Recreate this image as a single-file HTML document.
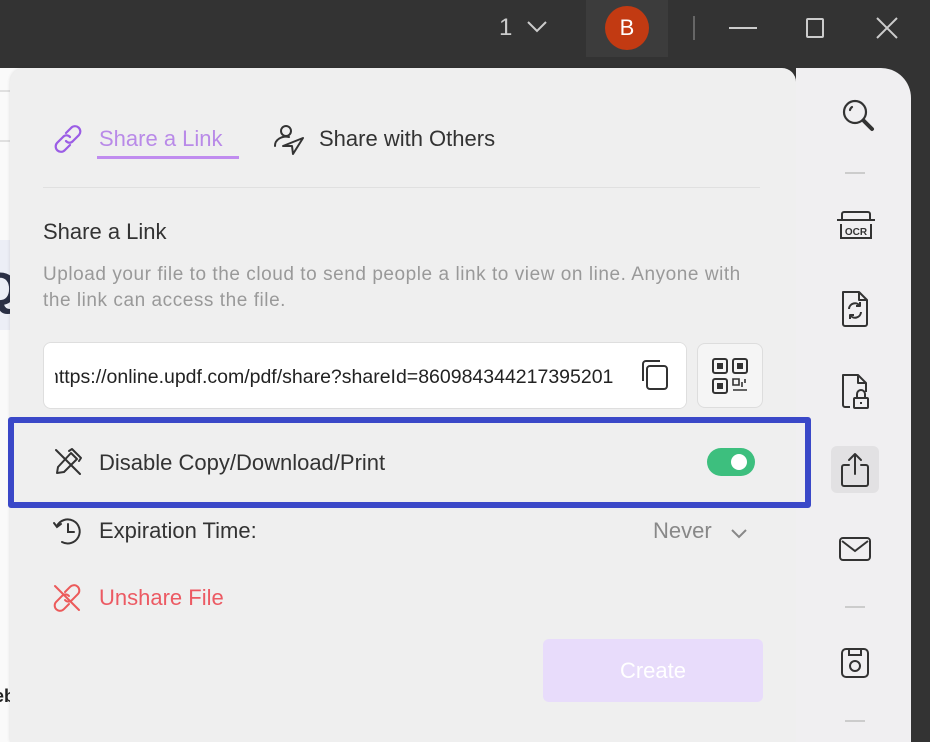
<!DOCTYPE html>
<html><head><meta charset="utf-8"><style>
*{margin:0;padding:0;box-sizing:border-box}
body{width:930px;height:742px;overflow:hidden;background:#333;font-family:"Liberation Sans",sans-serif;position:relative}
.abs{position:absolute}
.doc{left:0;top:68px;width:30px;height:674px;background:#fafafa}
.panel{left:10px;top:68px;width:786px;height:674px;background:#efefef;border-radius:14px 14px 0 0;box-shadow:0 0 3px rgba(0,0,0,.12)}
.side{left:796px;top:68px;width:115px;height:674px;background:#f0eff1;border-radius:0 30px 0 0}
.t{position:absolute;white-space:nowrap}
svg{position:absolute;overflow:visible}
</style></head><body>
<!-- title bar -->
<div class="t" style="left:499px;top:14px;font-size:24px;color:#ccc">1</div>
<svg style="left:526px;top:20px" width="22" height="14"><path d="M2 2 L11 11 L20 2" fill="none" stroke="#ccc" stroke-width="2"/></svg>
<div class="abs" style="left:586px;top:0;width:82px;height:57px;background:#3c3c3c"></div>
<div class="abs" style="left:605px;top:6px;width:44px;height:44px;border-radius:50%;background:#c23a12;color:#fff;font-size:22px;text-align:center;line-height:44px">B</div>
<div class="abs" style="left:693px;top:16px;width:2px;height:24px;background:#666"></div>
<div class="abs" style="left:729px;top:27px;width:28px;height:2px;background:#ccc"></div>
<div class="abs" style="left:806px;top:18px;width:18px;height:20px;border:2px solid #ccc;border-radius:2px"></div>
<svg style="left:876px;top:17px" width="22" height="22"><path d="M1 1L21 21M21 1L1 21" stroke="#ccc" stroke-width="2"/></svg>

<div class="abs doc"></div>
<div class="abs" style="left:0;top:90px;width:10px;height:2px;background:#e0e0e0"></div>
<div class="abs" style="left:0;top:140px;width:10px;height:2px;background:#e0e0e0"></div>
<div class="abs" style="left:0;top:240px;width:10px;height:90px;background:#eceef6"></div>
<div class="t" style="left:-18px;top:262px;font-size:46px;font-weight:bold;color:#2a2f45">Q</div>
<div class="t" style="left:-6px;top:686px;font-size:18px;font-weight:bold;color:#222">eb</div>

<div class="abs panel"></div>
<div class="abs side"></div>

<!-- tabs -->
<svg style="left:53px;top:124px" width="30" height="30" fill="none" stroke="#9b5de5" stroke-width="2.2" stroke-linecap="round"><path d="M13 9 L18 4 A4.5 4.5 0 0 1 26 11 L20 17 A4.5 4.5 0 0 1 13 17"/><path d="M17 21 L12 26 A4.5 4.5 0 0 1 4 19 L10 13 A4.5 4.5 0 0 1 17 13"/></svg>
<div class="t" style="left:99px;top:126px;font-size:22px;color:#b98ae8">Share a Link</div>
<div class="abs" style="left:97px;top:156px;width:142px;height:3px;background:#c08cef"></div>
<svg style="left:273px;top:124px" width="34" height="32" fill="none" stroke="#333" stroke-width="2" stroke-linecap="round" stroke-linejoin="round"><circle cx="13" cy="7" r="5"/><path d="M2 22 A11 9 0 0 1 16 13"/><path d="M10 22 L30 14 L20 30 L19 22 Z"/></svg>
<div class="t" style="left:319px;top:126px;font-size:22px;color:#333">Share with Others</div>
<div class="abs" style="left:43px;top:187px;width:717px;height:1px;background:#e0e0e0"></div>

<div class="t" style="left:43px;top:219px;font-size:22px;color:#333">Share a Link</div>
<div class="t" style="left:43px;top:262px;font-size:19px;color:#999;line-height:26px;letter-spacing:0.55px">Upload your file to the cloud to send people a link to view on line. Anyone with<br>the link can access the file.</div>

<div class="abs" style="left:43px;top:342px;width:644px;height:67px;background:#fff;border:1px solid #dedede;border-radius:8px;overflow:hidden">
<div class="t" style="left:4px;top:23px;font-size:19.5px;color:#222">https://online.updf.com/pdf/share?shareId=860984344217395201</div>
<div class="abs" style="right:0;top:0;width:60px;height:65px;background:#fff"></div>
</div>
<div class="abs" style="left:44px;top:343px;width:11px;height:65px;background:#fff;border-radius:8px 0 0 8px"></div>
<svg style="left:640px;top:359px" width="30" height="32" fill="none" stroke="#333" stroke-width="2"><rect x="7" y="7" width="20" height="23" rx="3"/><path d="M3 22 V5 A3 3 0 0 1 6 2 H20"/></svg>
<div class="abs" style="left:697px;top:343px;width:66px;height:65px;background:#f5f5f5;border:1px solid #ddd;border-radius:8px"></div>
<svg style="left:712px;top:358px" width="36" height="36" fill="none" stroke="#333" stroke-width="2"><rect x="1" y="1" width="14" height="14" rx="2"/><rect x="21" y="1" width="14" height="14" rx="2"/><rect x="1" y="21" width="14" height="14" rx="2"/><rect x="6" y="6" width="4" height="4" fill="#333"/><rect x="26" y="6" width="4" height="4" fill="#333"/><rect x="6" y="26" width="4" height="4" fill="#333"/><path d="M21 21h6v6h-6zM30 24v5M21 32h14M33 21v4" stroke-width="1.6"/></svg>

<!-- highlighted row -->
<div class="abs" style="left:8px;top:417px;width:803px;height:91px;border:6px solid #3a48c8;border-radius:3px"></div>
<svg style="left:54px;top:448px" width="28" height="28" fill="none" stroke="#333" stroke-width="2" stroke-linecap="round" stroke-linejoin="round"><path d="M3 25 L4 19 L17 5 L23 11 L10 24 Z"/><path d="M15 3 L18 1 L27 10 L25 13"/><path d="M2 2 L26 26"/></svg>
<div class="t" style="left:99px;top:450px;font-size:22px;color:#333">Disable Copy/Download/Print</div>
<div class="abs" style="left:707px;top:448px;width:48px;height:28px;background:#3dbf7e;border-radius:14px"></div>
<div class="abs" style="left:731px;top:454px;width:16px;height:16px;background:#fff;border-radius:50%"></div>

<svg style="left:52px;top:515px" width="32" height="32" fill="none" stroke="#333" stroke-width="2" stroke-linecap="round"><path d="M5 11 A12 12 0 1 1 10 27"/><path d="M2 8 L5 12 L9 9"/><path d="M16 9 V17 H22"/></svg>
<div class="t" style="left:99px;top:518px;font-size:22px;color:#333">Expiration Time:</div>
<div class="t" style="left:653px;top:518px;font-size:22px;color:#888">Never</div>
<svg style="left:730px;top:527px" width="18" height="12"><path d="M2 3 L9 10 L16 3" fill="none" stroke="#888" stroke-width="2"/></svg>

<svg style="left:52px;top:583px" width="30" height="30" fill="none" stroke="#ec5a5a" stroke-width="2" stroke-linecap="round"><path d="M13 9 L18 4 A4.5 4.5 0 0 1 26 11 L20 17 A4.5 4.5 0 0 1 13 17"/><path d="M17 21 L12 26 A4.5 4.5 0 0 1 4 19 L10 13 A4.5 4.5 0 0 1 17 13"/><path d="M3 3 L27 27"/></svg>
<div class="t" style="left:99px;top:585px;font-size:22px;color:#ec5a63">Unshare File</div>

<div class="abs" style="left:543px;top:639px;width:220px;height:63px;background:#e8dcfb;border-radius:6px;color:#fff;font-size:22px;text-align:center;line-height:63px">Create</div>

<!-- sidebar icons -->
<svg style="left:840px;top:98px" width="36" height="36" fill="none" stroke="#333" stroke-width="2.2" stroke-linecap="round"><circle cx="15" cy="14" r="11"/><path d="M24 23 L32 31" stroke-width="4"/><path d="M10 12 A5 5 0 0 1 12 9"/></svg>
<div class="abs" style="left:845px;top:172px;width:20px;height:2px;background:#ccc"></div>
<svg style="left:836px;top:211px" width="40" height="36" fill="none" stroke="#333" stroke-width="2"><path d="M6 9 V3 A2 2 0 0 1 8 1 H32 A2 2 0 0 1 34 3 V9"/><path d="M1 9 H39"/><path d="M5 13 V27 H35 V13"/><text x="20" y="24" font-size="10" font-weight="bold" fill="#333" stroke="none" text-anchor="middle" font-family="Liberation Sans">OCR</text></svg>
<svg style="left:840px;top:290px" width="30" height="38" fill="none" stroke="#333" stroke-width="2" stroke-linejoin="round"><path d="M3 2 H19 L27 10 V34 A2 2 0 0 1 25 36 H5 A2 2 0 0 1 3 34 Z"/><path d="M19 2 V10 H27"/><path d="M9 19 A6 6 0 0 1 20 16 M21 22 A6 6 0 0 1 10 25"/><path d="M20 12 V16 H16 M10 29 V25 H14"/></svg>
<svg style="left:840px;top:372px" width="32" height="40" fill="none" stroke="#333" stroke-width="2" stroke-linejoin="round"><path d="M10 35 H5 A2 2 0 0 1 3 33 V3 H18 L26 11 V20"/><path d="M18 3 V11 H26"/><rect x="14" y="26" width="14" height="10" rx="1"/><path d="M17 26 V22 A4 4 0 0 1 25 22 V26"/><path d="M21 30 V32"/></svg>
<div class="abs" style="left:831px;top:446px;width:48px;height:47px;background:#e2e1e3;border-radius:6px"></div>
<svg style="left:840px;top:452px" width="30" height="36" fill="none" stroke="#333" stroke-width="2" stroke-linecap="round" stroke-linejoin="round"><path d="M9 13 H4 A2 2 0 0 0 2 15 V32 A2 2 0 0 0 4 34 H26 A2 2 0 0 0 28 32 V15 A2 2 0 0 0 26 13 H21"/><path d="M15 22 V2 M9 8 L15 2 L21 8"/></svg>
<svg style="left:838px;top:536px" width="34" height="28" fill="none" stroke="#333" stroke-width="2"><rect x="2" y="2" width="30" height="22" rx="3"/><path d="M4 5 L17 15 L30 5"/></svg>
<div class="abs" style="left:845px;top:606px;width:20px;height:2px;background:#ccc"></div>
<svg style="left:840px;top:647px" width="30" height="32" fill="none" stroke="#333" stroke-width="2"><rect x="2" y="2" width="26" height="28" rx="4"/><path d="M9 2 V8 H21 V2"/><circle cx="15" cy="19" r="5"/></svg>
<div class="abs" style="left:845px;top:720px;width:20px;height:2px;background:#ccc"></div>
</body></html>
